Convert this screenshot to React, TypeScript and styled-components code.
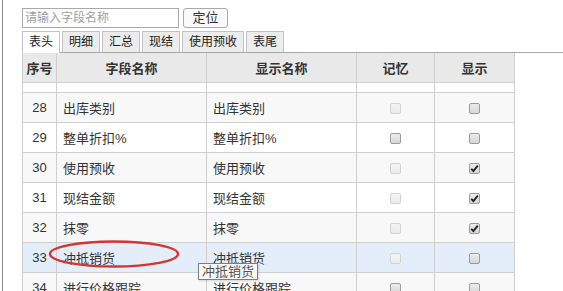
import React from "react";
import styled, { createGlobalStyle } from "styled-components";

const GlobalStyle = createGlobalStyle`
  html, body {
    margin: 0;
    padding: 0;
    background: #ffffff;
  }
  body {
    font-family: "Liberation Sans", "Noto Sans CJK SC", sans-serif;
    color: #333;
  }
`;

const Page = styled.div`
  position: relative;
  height: 291px;
  overflow: hidden;
  margin-left: 2px;
  border-left: 1px solid #8c8c8c;
  padding: 8px 0 0 19px;
  box-sizing: border-box;
`;

const SearchRow = styled.div`
  display: flex;
  align-items: center;
  gap: 4px;
`;

const SearchInput = styled.input`
  width: 157px;
  height: 20px;
  box-sizing: border-box;
  border: 1px solid #a9a9a9;
  padding: 0 2px;
  font-family: inherit;
  font-size: 12px;
  outline: none;
  &::placeholder {
    color: #a0a0a0;
  }
`;

const LocateButton = styled.button`
  width: 45px;
  height: 20px;
  box-sizing: border-box;
  border: 1px solid #a9a9a9;
  border-radius: 3px;
  background: #fafafa;
  font-family: inherit;
  font-size: 13px;
  color: #333;
  padding: 0;
  line-height: 18px;
`;

const TabBar = styled.div`
  display: flex;
  align-items: flex-end;
  gap: 2px;
  margin-top: 3px;
  border-bottom: 1px solid #a9a9a9;
`;

const Tab = styled.div<{ $active?: boolean }>`
  padding: 0 6px;
  border: 1px solid #c2c2c2;
  border-bottom: none;
  background: ${(p) => (p.$active ? "#ffffff" : "#ececec")};
  font-size: 12px;
  line-height: 21px;
  color: #222;
  margin-bottom: ${(p) => (p.$active ? "-1px" : "0")};
  height: ${(p) => (p.$active ? "21px" : "20px")};
`;

const Grid = styled.table`
  width: 492px;
  table-layout: fixed;
  border-collapse: collapse;
  font-size: 13px;
`;

const HeadCell = styled.th`
  height: 29px;
  padding: 0;
  border: 1px solid #cfcfcf;
  border-top: none;
  background: #e9e9e9;
  font-weight: bold;
  text-align: center;
  color: #333;
`;

const Row = styled.tr<{ $tone: "plain" | "stripe" | "hover" }>`
  background: ${(p) =>
    p.$tone === "hover" ? "#e4eefb" : p.$tone === "stripe" ? "#f8f8f8" : "#ffffff"};
`;

const Cell = styled.td<{ $align?: "left" | "center" }>`
  height: 29px;
  padding: 0 6px;
  border: 1px solid #cfcfcf;
  text-align: ${(p) => p.$align || "left"};
  white-space: nowrap;
  overflow: hidden;
  color: #333;
`;

const FillerCell = styled.td`
  height: 9px;
  padding: 0;
  border: 1px solid #cfcfcf;
  border-top: none;
`;

const Box = styled.span<{ $disabled?: boolean }>`
  display: inline-flex;
  align-items: center;
  justify-content: center;
  width: 11px;
  height: 11px;
  box-sizing: border-box;
  vertical-align: middle;
  border-radius: 2px;
  border: 1px solid ${(p) => (p.$disabled ? "#d2d2d2" : "#9c9c9c")};
  background: ${(p) =>
    p.$disabled
      ? "linear-gradient(#f4f4f4, #ebebeb)"
      : "linear-gradient(#ececec, #d6d6d6)"};
`;

const Ring = styled.svg`
  position: absolute;
  left: 44px;
  top: 239px;
  overflow: visible;
`;

const Tooltip = styled.div`
  position: absolute;
  left: 195px;
  top: 263px;
  height: 17px;
  padding: 0 3px;
  box-sizing: border-box;
  border: 1px solid #7d7d7d;
  background: #f7f7f7;
  font-size: 13px;
  line-height: 15px;
  color: #555;
  box-shadow: 1px 1px 2px rgba(0, 0, 0, 0.15);
`;

function Check({ checked, disabled }: { checked?: boolean; disabled?: boolean }) {
  return (
    <Box $disabled={disabled}>
      {checked && (
        <svg width="9" height="9" viewBox="0 0 9 9">
          <path d="M1.2 4.8 L3.4 7 L7.8 1.6" fill="none" stroke="#222" strokeWidth="1.9" />
        </svg>
      )}
    </Box>
  );
}

const tabs = ["表头", "明细", "汇总", "现结", "使用预收", "表尾"];

const rows = [
  { no: 28, name: "出库类别", memDisabled: true, show: false },
  { no: 29, name: "整单折扣%", memDisabled: false, show: false },
  { no: 30, name: "使用预收", memDisabled: true, show: true },
  { no: 31, name: "现结金额", memDisabled: true, show: true },
  { no: 32, name: "抹零", memDisabled: true, show: true },
  { no: 33, name: "冲抵销货", memDisabled: true, show: false },
  { no: 34, name: "进行价格跟踪", memDisabled: false, show: false },
];

export default function App() {
  return (
    <>
      <GlobalStyle />
      <Page>
        <SearchRow>
          <SearchInput placeholder="请输入字段名称" />
          <LocateButton>定位</LocateButton>
        </SearchRow>
        <TabBar>
          {tabs.map((t, i) => (
            <Tab key={t} $active={i === 0}>
              {t}
            </Tab>
          ))}
        </TabBar>
        <Grid>
          <colgroup>
            <col style={{ width: 34 }} />
            <col style={{ width: 150 }} />
            <col style={{ width: 150 }} />
            <col style={{ width: 78 }} />
            <col style={{ width: 80 }} />
          </colgroup>
          <thead>
            <tr>
              <HeadCell>序号</HeadCell>
              <HeadCell>字段名称</HeadCell>
              <HeadCell>显示名称</HeadCell>
              <HeadCell>记忆</HeadCell>
              <HeadCell>显示</HeadCell>
            </tr>
          </thead>
          <tbody>
            <tr>
              <FillerCell />
              <FillerCell />
              <FillerCell />
              <FillerCell />
              <FillerCell />
            </tr>
            {rows.map((r) => (
              <Row
                key={r.no}
                $tone={r.no === 33 ? "hover" : r.no % 2 === 0 ? "stripe" : "plain"}
              >
                <Cell $align="center">{r.no}</Cell>
                <Cell>{r.name}</Cell>
                <Cell>{r.name}</Cell>
                <Cell $align="center">
                  <Check disabled={r.memDisabled} />
                </Cell>
                <Cell $align="center">
                  <Check checked={r.show} />
                </Cell>
              </Row>
            ))}
          </tbody>
        </Grid>
        <Ring width="134" height="30" viewBox="0 0 134 30">
          <ellipse cx="67" cy="15" rx="64" ry="12.5" fill="none" stroke="#d6342f" strokeWidth="2.4" />
        </Ring>
        <Tooltip>冲抵销货</Tooltip>
      </Page>
    </>
  );
}
